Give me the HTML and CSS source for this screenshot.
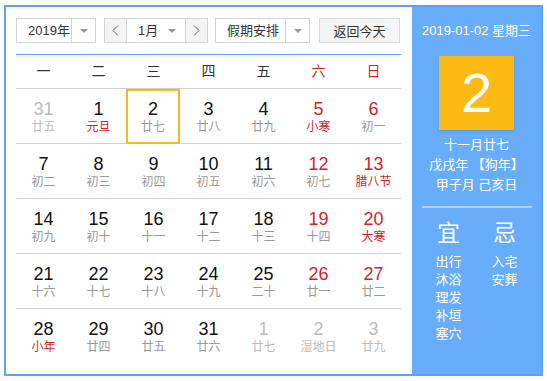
FILE: index.html
```html
<!DOCTYPE html>
<html>
    <head>
        <title>万年历</title>
        <link rel="stylesheet" href="styles.css">
    </head>
    <body>
        <div class="calendar">
            <div class="main">
                <div class="toolbar">
                    <div class="select year-select">
                        <span class="select-text">2019年</span>
                        <span class="select-arrow"><i class="caret"></i></span>
                    </div>
                    <div class="month-group">
                        <span class="nav-btn">
                            <svg width="7" height="11" viewBox="0 0 7 11"><polyline points="6,0.5 1,5.5 6,10.5" fill="none" stroke="#666" stroke-width="1"/></svg>
                        </span>
                        <span class="month-text">1月</span>
                        <span class="month-arrow"><i class="caret"></i></span>
                        <span class="nav-btn">
                            <svg width="7" height="11" viewBox="0 0 7 11"><polyline points="1,0.5 6,5.5 1,10.5" fill="none" stroke="#666" stroke-width="1"/></svg>
                        </span>
                    </div>
                    <div class="select holiday-select">
                        <span class="select-text">假期安排</span>
                        <span class="select-arrow"><i class="caret"></i></span>
                    </div>
                    <button class="today-btn">返回今天</button>
                </div>

                <div class="weekdays">
                    <span>一</span><span>二</span><span>三</span><span>四</span><span>五</span>
                    <span class="red">六</span><span class="red">日</span>
                </div>

                <div class="days">
                    <div class="day other"><b>31</b><em>廿五</em></div>
                    <div class="day"><b>1</b><em class="red">元旦</em></div>
                    <div class="day selected"><b>2</b><em>廿七</em></div>
                    <div class="day"><b>3</b><em>廿八</em></div>
                    <div class="day"><b>4</b><em>廿九</em></div>
                    <div class="day"><b class="red">5</b><em class="red">小寒</em></div>
                    <div class="day"><b class="red">6</b><em>初一</em></div>

                    <div class="day"><b>7</b><em>初二</em></div>
                    <div class="day"><b>8</b><em>初三</em></div>
                    <div class="day"><b>9</b><em>初四</em></div>
                    <div class="day"><b>10</b><em>初五</em></div>
                    <div class="day"><b>11</b><em>初六</em></div>
                    <div class="day"><b class="red">12</b><em>初七</em></div>
                    <div class="day"><b class="red">13</b><em class="red">腊八节</em></div>

                    <div class="day"><b>14</b><em>初九</em></div>
                    <div class="day"><b>15</b><em>初十</em></div>
                    <div class="day"><b>16</b><em>十一</em></div>
                    <div class="day"><b>17</b><em>十二</em></div>
                    <div class="day"><b>18</b><em>十三</em></div>
                    <div class="day"><b class="red">19</b><em>十四</em></div>
                    <div class="day"><b class="red">20</b><em class="red">大寒</em></div>

                    <div class="day"><b>21</b><em>十六</em></div>
                    <div class="day"><b>22</b><em>十七</em></div>
                    <div class="day"><b>23</b><em>十八</em></div>
                    <div class="day"><b>24</b><em>十九</em></div>
                    <div class="day"><b>25</b><em>二十</em></div>
                    <div class="day"><b class="red">26</b><em>廿一</em></div>
                    <div class="day"><b class="red">27</b><em>廿二</em></div>

                    <div class="day last"><b>28</b><em class="red">小年</em></div>
                    <div class="day last"><b>29</b><em>廿四</em></div>
                    <div class="day last"><b>30</b><em>廿五</em></div>
                    <div class="day last"><b>31</b><em>廿六</em></div>
                    <div class="day last other"><b>1</b><em>廿七</em></div>
                    <div class="day last other"><b>2</b><em>湿地日</em></div>
                    <div class="day last other"><b>3</b><em>廿九</em></div>
                </div>
            </div>

            <div class="side">
                <div class="side-date">2019-01-02 星期三</div>
                <div class="big-day">2</div>
                <div class="lunar">
                    <div>十一月廿七</div>
                    <div>戊戌年 【狗年】</div>
                    <div>甲子月 己亥日</div>
                </div>
                <div class="side-line"></div>
                <div class="almanac">
                    <div class="alm-col">
                        <div class="alm-title">宜</div>
                        <div>出行</div>
                        <div>沐浴</div>
                        <div>理发</div>
                        <div>补垣</div>
                        <div>塞穴</div>
                    </div>
                    <div class="alm-col">
                        <div class="alm-title">忌</div>
                        <div>入宅</div>
                        <div>安葬</div>
                    </div>
                </div>
            </div>
        </div>
    </body>
</html>
```

FILE: styles.css
```css
body {
    margin: 0;
    font-family: "Liberation Sans", "Noto Sans CJK SC", sans-serif;
    background: #fff;
}
.calendar {
    display: flex;
    width: 535px;
    height: 367px;
    margin: 5px 0 0 4px;
    border: 2px solid #5ea2ee;
}
.main {
    width: 385px;
    padding: 11px 11px 0 10px;
}
.red {
    color: #d2232b !important;
}

/* toolbar */
.toolbar {
    display: flex;
    height: 25px;
    font-size: 13px;
    color: #333;
}
.select {
    display: flex;
    box-sizing: border-box;
    height: 25px;
    border: 1px solid #d3d3d3;
    background: #fff;
}
.select-text {
    line-height: 23px;
    padding-left: 11px;
}
.select-arrow, .month-arrow {
    display: flex;
    align-items: center;
    justify-content: center;
}
.select-arrow {
    border-left: 1px solid #d3d3d3;
    width: 23px;
    margin-left: auto;
}
.caret {
    width: 0;
    height: 0;
    border-left: 4px solid transparent;
    border-right: 4px solid transparent;
    border-top: 4px solid #999;
}
.year-select {
    width: 80px;
}
.month-group {
    display: flex;
    box-sizing: border-box;
    width: 104px;
    height: 25px;
    margin-left: 8px;
    border: 1px solid #d3d3d3;
}
.nav-btn {
    display: flex;
    align-items: center;
    justify-content: center;
    width: 21px;
    background: #f4f4f4;
}
.month-text {
    line-height: 23px;
    padding-left: 11px;
    border-left: 1px solid #d3d3d3;
}
.month-arrow {
    width: 26px;
    margin-left: auto;
    border-right: 1px solid #d3d3d3;
}
.holiday-select {
    width: 95px;
    margin-left: 7px;
}
.today-btn {
    width: 81px;
    height: 25px;
    margin-left: 9px;
    border: 1px solid #d9d9d9;
    background: #f5f5f5;
    font-family: inherit;
    font-size: 13px;
    color: #333;
    padding: 0;
}

/* grid */
.weekdays {
    display: grid;
    grid-template-columns: repeat(7, 55px);
    margin-top: 11px;
    border-top: 1px solid #5ea6f3;
    border-bottom: 1px solid #d0d0d0;
    height: 33px;
    line-height: 33px;
    text-align: center;
    font-size: 14px;
    color: #333;
}
.days {
    display: grid;
    grid-template-columns: repeat(7, 55px);
}
.day {
    box-sizing: border-box;
    height: 55px;
    padding-top: 10px;
    border-bottom: 1px solid #d0d0d0;
    text-align: center;
}
.day.last {
    border-bottom: none;
}
.day b {
    display: block;
    font-weight: normal;
    font-size: 18px;
    line-height: 20px;
    color: #111;
}
.day em {
    display: block;
    font-style: normal;
    font-size: 12px;
    line-height: 16px;
    color: #999;
}
.day.other b, .day.other em {
    color: #bbb;
}
.day.selected {
    border: 2px solid #f5b921;
    padding-top: 8px;
    width: 54px;
}

/* side panel */
.side {
    width: 129px;
    margin-left: auto;
    background: #67adf9;
    color: #fff;
    display: flex;
    flex-direction: column;
    align-items: center;
    font-size: 13px;
}
.side-date {
    margin-top: 14px;
    line-height: 20px;
}
.big-day {
    width: 75px;
    height: 74px;
    margin-top: 15px;
    background: #fdb914;
    box-shadow: 0 1px 2px rgba(0, 0, 0, 0.15);
    text-align: center;
    line-height: 74px;
    font-size: 56px;
}
.lunar {
    margin-top: 5px;
    line-height: 20px;
    text-align: center;
}
.side-line {
    width: 110px;
    height: 2px;
    margin-top: 11px;
    background: rgba(255, 255, 255, 0.45);
}
.almanac {
    display: flex;
    margin-top: 10px;
}
.alm-col {
    width: 56px;
    text-align: center;
    line-height: 18px;
}
.alm-title {
    font-size: 23px;
    line-height: 30px;
    margin-bottom: 5px;
}
```
